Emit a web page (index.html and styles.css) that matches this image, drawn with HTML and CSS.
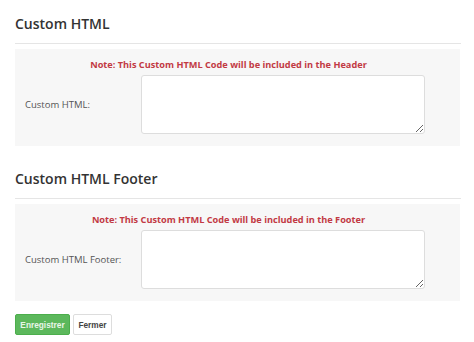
FILE: index.html
```html
<!DOCTYPE html>
<html lang="en">

<head>
    <meta charset="UTF-8">
    <meta name="viewport" content="width=device-width, initial-scale=1.0">
    <title>Custom HTML</title>
    <link rel="stylesheet" href="styles.css">
</head>

<body>
    <div class="page">
        <h3 class="section-title">Custom HTML</h3>
        <div class="panel">
            <p class="note">Note: This Custom HTML Code will be included in the Header</p>
            <div class="form-row">
                <label class="form-label" for="html-header">Custom HTML:</label>
                <textarea class="form-input" id="html-header"></textarea>
            </div>
        </div>

        <h3 class="section-title section-title-second">Custom HTML Footer</h3>
        <div class="panel">
            <p class="note">Note: This Custom HTML Code will be included in the Footer</p>
            <div class="form-row">
                <label class="form-label" for="html-footer">Custom HTML Footer:</label>
                <textarea class="form-input" id="html-footer"></textarea>
            </div>
        </div>

        <div class="actions">
            <button class="btn btn-save">Enregistrer</button>
            <button class="btn btn-close">Fermer</button>
        </div>
    </div>
</body>

</html>
```

FILE: styles.css
```css
body {
    margin: 0;
    background-color: #fff;
    font-family: "Open Sans", "Liberation Sans", sans-serif;
    color: #333;
}

.page {
    width: 446px;
    padding: 0 0 0 15px;
}

/* titres de section */
.section-title {
    margin: 0;
    padding: 14px 0 10px;
    font-size: 14px;
    font-weight: 600;
    line-height: 19px;
    border-bottom: 1px solid #e5e5e5;
}

.section-title-second {
    padding-top: 23px;
}

.panel {
    width: 445px;
    margin-top: 5px;
    padding: 9px 0 12px;
    background-color: #f7f7f7;
}

.note {
    margin: 0 0 3px;
    padding-right: 18px;
    text-align: center;
    font-size: 9.2px;
    line-height: 14px;
    font-weight: 700;
    color: #c23a44;
}

.form-row {
    display: flex;
    align-items: center;
}

.form-label {
    width: 116px;
    padding-left: 10px;
    font-size: 9.5px;
    color: #555;
}

.form-input {
    width: 284px;
    height: 59px;
    margin: 0;
    padding: 4px;
    box-sizing: border-box;
    border: 1px solid #ddd;
    border-radius: 3px;
    background-color: #fff;
    resize: vertical;
}

.actions {
    display: flex;
    gap: 3px;
    margin-top: 13px;
}

.btn {
    height: 21px;
    padding: 0;
    font-family: "Liberation Sans", Arial, sans-serif;
    font-size: 8.3px;
    font-weight: 700;
    border-radius: 2px;
    cursor: pointer;
}

.btn-save {
    width: 55px;
    border: 1px solid #4cae4c;
    background-color: #5cb85c;
    color: #e8f5e8;
}

.btn-close {
    width: 39px;
    border: 1px solid #ddd;
    background-color: #fff;
    color: #444;
}
```
